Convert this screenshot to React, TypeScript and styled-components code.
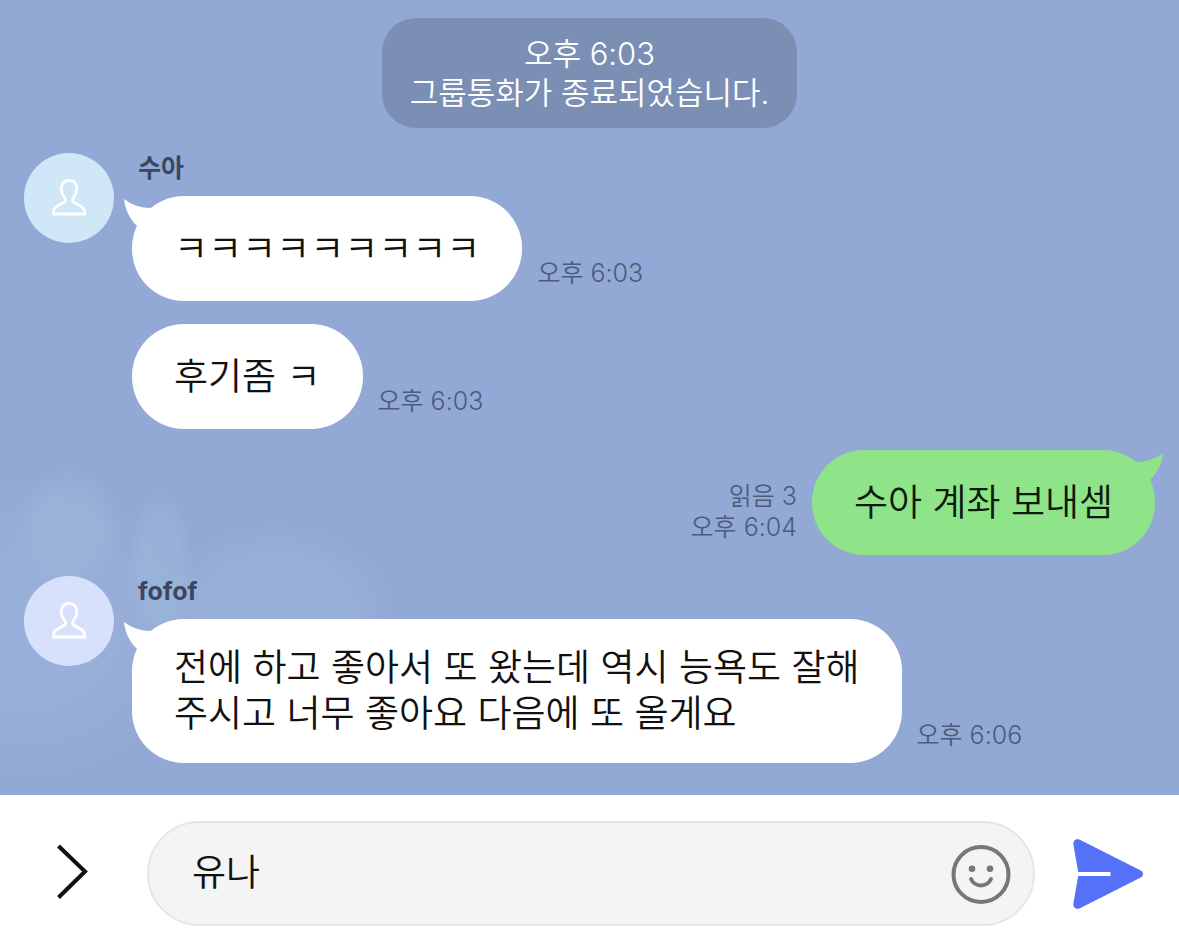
import React from "react";
import styled, { createGlobalStyle } from "styled-components";

const GlobalStyle = createGlobalStyle`
  * { box-sizing: border-box; }
  body {
    margin: 0;
    font-family: Inter, "Noto Sans CJK KR", sans-serif;
    font-weight: 350;
    color: #111;
  }
  button { border: 0; padding: 0; background: none; cursor: pointer; display: block; }
  svg { display: block; overflow: visible; }
`;

const Page = styled.div`
  min-height: 100vh;
  display: flex;
  flex-direction: column;
`;

const Chat = styled.main`
  flex: 1;
  display: flex;
  flex-direction: column;
  padding: 18px 24px 32px;
  background:
    radial-gradient(ellipse 54px 60px at 68px 528px, rgba(158, 186, 218, 0.45) 60%, transparent),
    radial-gradient(ellipse 34px 80px at 160px 570px, rgba(158, 186, 218, 0.45) 60%, transparent),
    radial-gradient(ellipse 120px 90px at 275px 615px, rgba(158, 182, 220, 0.5) 60%, transparent),
    radial-gradient(ellipse 180px 150px at 20px 630px, rgba(158, 182, 222, 0.5) 40%, transparent),
    #93a9d5;
`;

const Notice = styled.p`
  align-self: center;
  margin: 0 0 25px;
  padding: 16px 28px;
  border-radius: 34px;
  background: #7b8fb5;
  color: #fff;
  font-size: 31px;
  line-height: 39px;
  text-align: center;
`;

const Group = styled.section`
  display: flex;
  gap: 18px;
  margin-bottom: 21px;

  &:last-child { margin-bottom: 0; }
`;

const Avatar = styled.div<{ $color: string }>`
  flex: none;
  width: 90px;
  height: 90px;
  border-radius: 50%;
  display: grid;
  place-items: center;
  background: ${(p) => p.$color};
`;

const Thread = styled.div`
  flex: 1;
  min-width: 0;
`;

const Name = styled.h2`
  margin: 0;
  padding: 0 6px 13px;
  font-size: 25px;
  line-height: 30px;
  font-weight: 700;
  color: #3b475e;
`;

const Row = styled.div<{ $mine?: boolean }>`
  display: flex;
  flex: 1;
  flex-direction: ${(p) => (p.$mine ? "row-reverse" : "row")};
  align-items: flex-end;
  gap: 15px;

  & + & { margin-top: 23px; }
`;

const Bubble = styled.div<{ $mine?: boolean }>`
  position: relative;
  display: flex;
  align-items: center;
  min-height: 105px;
  padding: 26px 42px;
  border-radius: 52px;
  background: ${(p) => (p.$mine ? "#8fe389" : "#fff")};
  color: ${(p) => (p.$mine ? "#0b1a0b" : "#111")};
  font-size: 37px;
  line-height: 46px;
  white-space: pre-line;
`;

const Tail = styled.svg<{ $mine?: boolean }>`
  position: absolute;
  top: 3px;
  ${(p) => (p.$mine ? "right: -8px; transform: scaleX(-1);" : "left: -8px;")}
  fill: ${(p) => (p.$mine ? "#8fe389" : "#fff")};
`;

const Meta = styled.div<{ $mine?: boolean }>`
  padding-bottom: 12px;
  font-size: 25px;
  line-height: 31px;
  color: #4c5b7c;
  white-space: nowrap;
  text-align: ${(p) => (p.$mine ? "right" : "left")};
`;

const Composer = styled.form`
  display: flex;
  align-items: center;
  padding: 26px 35px 22px 56px;
  background: #fff;
`;

const Field = styled.div`
  flex: 1;
  min-width: 0;
  height: 105px;
  margin: 0 38px 0 59px;
  padding: 0 22px 0 43px;
  display: flex;
  align-items: center;
  border: 2px solid #e6e6e6;
  border-radius: 53px;
  background: #f4f4f4;
`;

const TextInput = styled.input`
  flex: 1;
  min-width: 0;
  height: 64px;
  border: 0;
  padding: 0 0 8px;
  outline: 0;
  background: none;
  color: #111;
  font: 350 37px/46px Inter, "Noto Sans CJK KR", sans-serif;
`;

const PersonIcon = () => (
  <svg width="34" height="38" viewBox="0 0 34 38" fill="none" stroke="#fff" strokeWidth="2.8" aria-hidden="true">
    <path d="M17 1.4C12 1.4 9.2 5 9.2 9.8C9.2 13.5 10.8 16.3 12.5 18.5C14 20.5 13.7 22.3 12 23.3L4.5 27.8C2.3 29.2 1.5 31 1.5 33V35H32.5V33C32.5 31 31.7 29.2 29.5 27.8L22 23.3C20.3 22.3 20 20.5 21.5 18.5C23.2 16.3 24.8 13.5 24.8 9.8C24.8 5 22 1.4 17 1.4Z" />
  </svg>
);

const BubbleTail = ({ mine }: { mine?: boolean }) => (
  <Tail $mine={mine} width="28" height="28" viewBox="0 0 28 28" aria-hidden="true">
    <path d="M0 0C8 6 17 9 27 9V27H13C5 19 1 10 0 0Z" />
  </Tail>
);

type MessageProps = { text: string; time: string; read?: string; mine?: boolean; tail?: boolean };

const Message = ({ text, time, read, mine, tail }: MessageProps) => (
  <Row $mine={mine}>
    <Bubble $mine={mine}>
      {tail && <BubbleTail mine={mine} />}
      {text}
    </Bubble>
    <Meta $mine={mine}>
      {read && <div>{read}</div>}
      <time>{time}</time>
    </Meta>
  </Row>
);

export default function App() {
  return (
    <Page>
      <GlobalStyle />
      <Chat>
        <Notice>
          오후 6:03
          <br />
          그룹통화가 종료되었습니다.
        </Notice>
        <Group>
          <Avatar $color="#cfe7f7"><PersonIcon /></Avatar>
          <Thread>
            <Name>수아</Name>
            <Message tail text="ㅋㅋㅋㅋㅋㅋㅋㅋㅋ" time="오후 6:03" />
            <Message text="후기좀 ㅋ" time="오후 6:03" />
          </Thread>
        </Group>
        <Group>
          <Message mine tail text="수아 계좌 보내셈" read="읽음 3" time="오후 6:04" />
        </Group>
        <Group>
          <Avatar $color="#d8e1fb"><PersonIcon /></Avatar>
          <Thread>
            <Name>fofof</Name>
            <Message
              tail
              text={"전에 하고 좋아서 또 왔는데 역시 능욕도 잘해\n주시고 너무 좋아요 다음에 또 올게요"}
              time="오후 6:06"
            />
          </Thread>
        </Group>
      </Chat>
      <Composer onSubmit={(e) => e.preventDefault()}>
        <button type="button" aria-label="메뉴 열기">
          <svg width="32" height="56" viewBox="0 0 32 56" fill="none" stroke="#111" strokeWidth="4">
            <path d="M2.5 0L29 25.5L2.5 51.5" />
          </svg>
        </button>
        <Field>
          <TextInput type="text" aria-label="메시지 입력" defaultValue="유나" />
          <button type="button" aria-label="이모티콘">
            <svg width="60" height="60" viewBox="0 0 60 60" fill="none" stroke="#777" strokeWidth="4" strokeLinecap="round">
              <circle cx="30" cy="30.5" r="27.5" />
              <path d="M20 35C24 43.5 36 43.5 40 35" />
              <circle cx="21" cy="24.8" r="3.3" fill="#777" stroke="none" />
              <circle cx="39" cy="24.8" r="3.3" fill="#777" stroke="none" />
            </svg>
          </button>
        </Field>
        <button type="submit" aria-label="보내기">
          <svg width="71" height="70" viewBox="0 0 71 70" fill="#5571f8">
            <path d="M0.4 5.4C-0.1 1.5 3 -0.9 6.4 0.6L67.3 31.2C71 33.2 71 36.8 67.3 38.8L6.4 69.4C3 70.9-0.1 68.5 0.4 64.6L5.2 37H37.5V33H5.2Z" />
          </svg>
        </button>
      </Composer>
    </Page>
  );
}
